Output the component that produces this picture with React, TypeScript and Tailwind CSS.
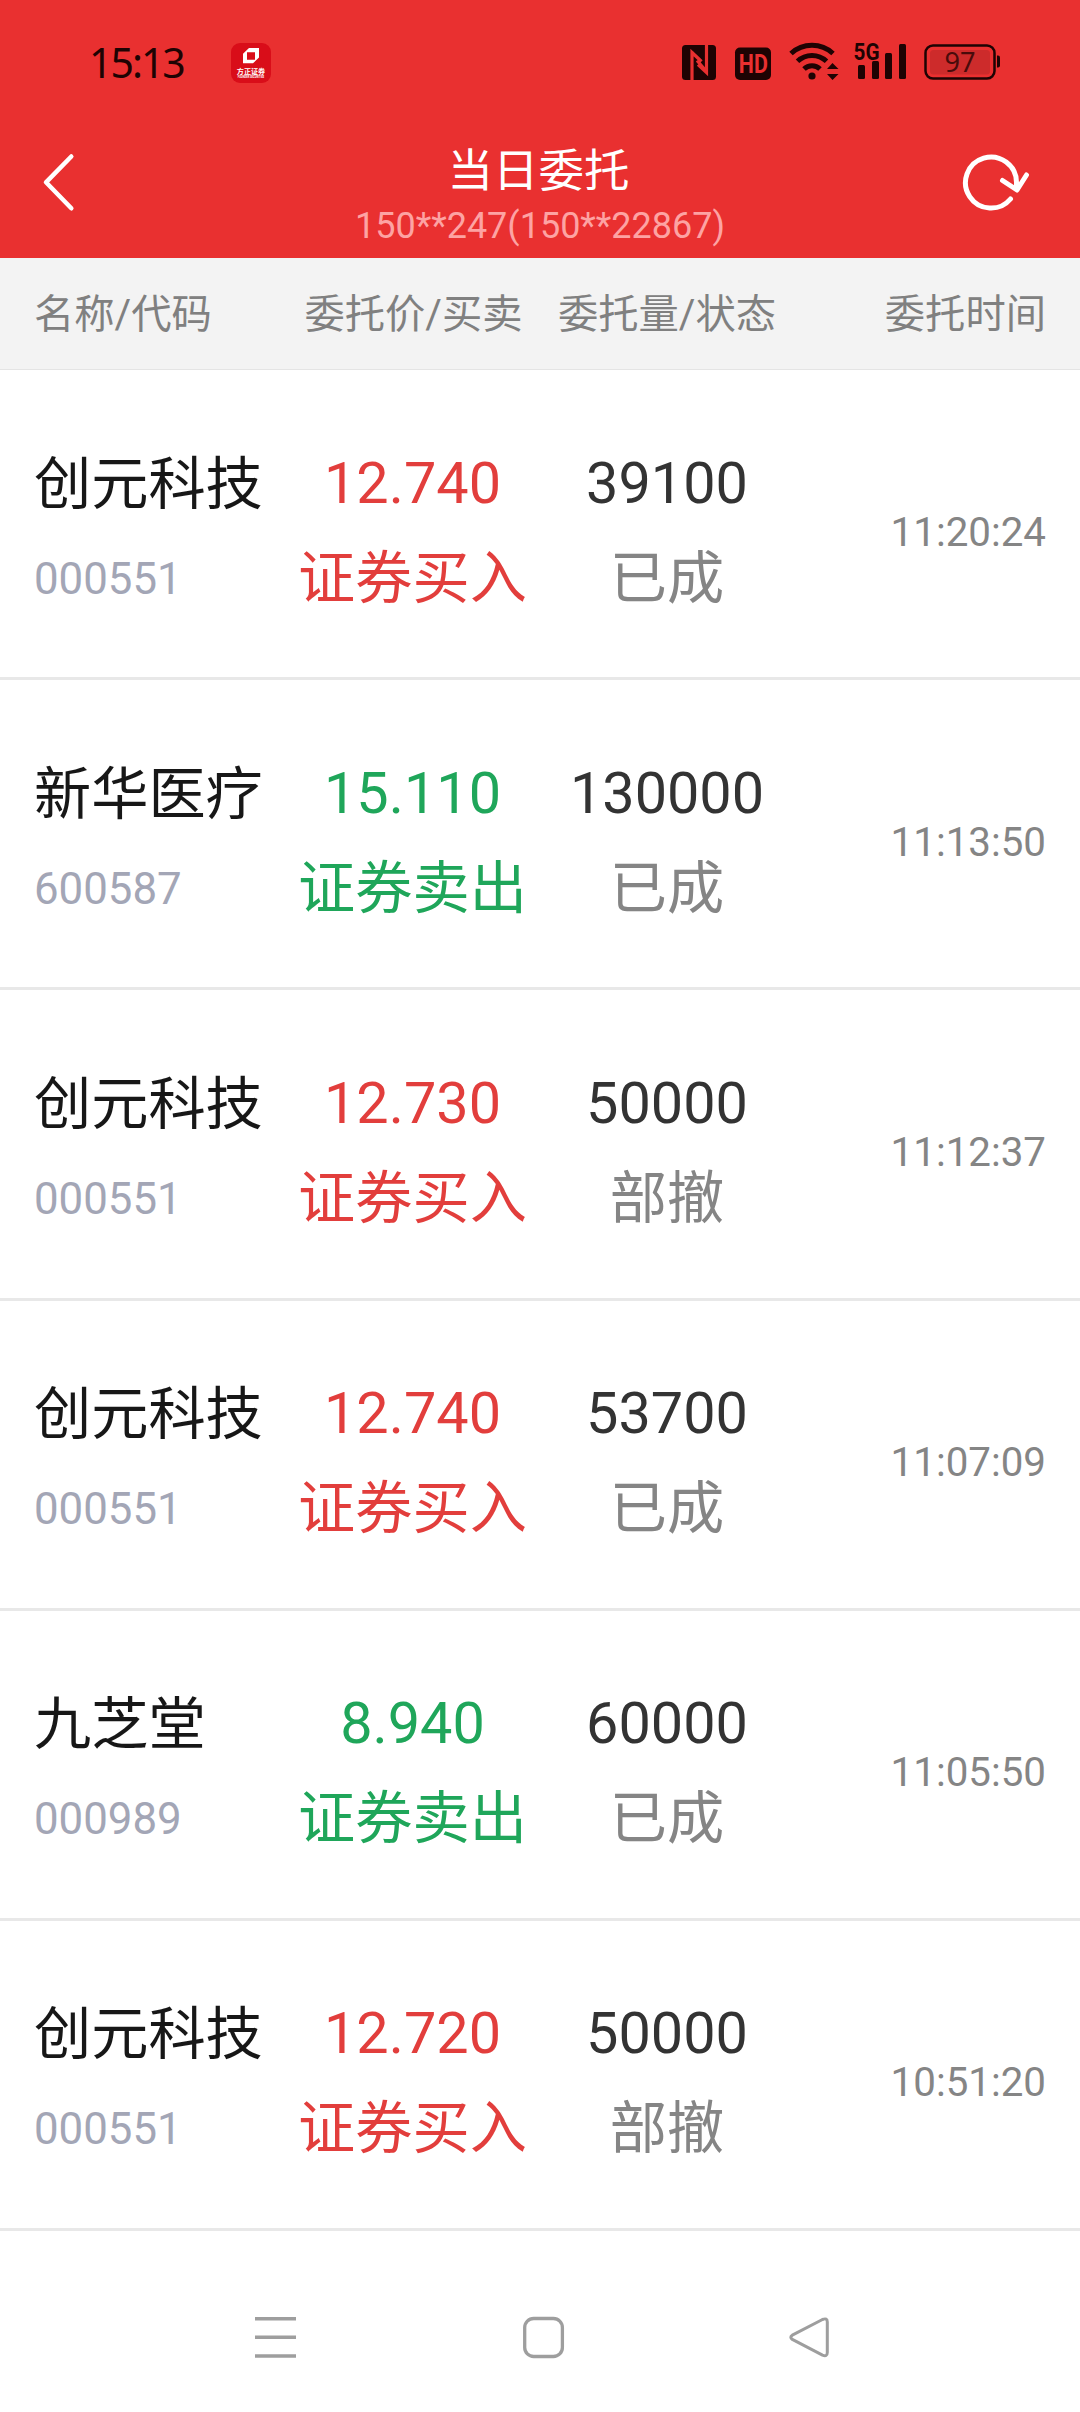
type Side = "buy" | "sell";

type Order = {
  name: string;
  code: string;
  price: string;
  side: Side;
  amount: string;
  status: string;
  time: string;
};

const orders: Order[] = [
  { name: "创元科技", code: "000551", price: "12.740", side: "buy", amount: "39100", status: "已成", time: "11:20:24" },
  { name: "新华医疗", code: "600587", price: "15.110", side: "sell", amount: "130000", status: "已成", time: "11:13:50" },
  { name: "创元科技", code: "000551", price: "12.730", side: "buy", amount: "50000", status: "部撤", time: "11:12:37" },
  { name: "创元科技", code: "000551", price: "12.740", side: "buy", amount: "53700", status: "已成", time: "11:07:09" },
  { name: "九芝堂", code: "000989", price: "8.940", side: "sell", amount: "60000", status: "已成", time: "11:05:50" },
  { name: "创元科技", code: "000551", price: "12.720", side: "buy", amount: "50000", status: "部撤", time: "10:51:20" },
];

const sideLabel: Record<Side, string> = { buy: "证券买入", sell: "证券卖出" };
const sideColor: Record<Side, string> = { buy: "text-[#e23e3c]", sell: "text-[#1fa65a]" };

function BrokerBadge() {
  return (
    <svg className="ml-[47px] size-10" viewBox="0 0 40 40">
      <rect width="40" height="40" rx="9" fill="#d90d19" />
      <path fillRule="evenodd" fill="#fff" d="M18 5H28v9.500L22 20.300H12v-9.500zM16 9.300v7.500h8V9.300z" />
      <text x="20" y="31" textAnchor="middle" fontSize="7.100" fontWeight="700" fill="#fff" fontFamily="Noto Sans CJK SC, sans-serif">方正证券</text>
      <text x="20" y="35" textAnchor="middle" fontSize="2.600" fontWeight="700" fill="#fff" fontFamily="Roboto, sans-serif">FOUNDER SECURITIES</text>
    </svg>
  );
}

function StatusBar() {
  return (
    <div className="flex h-[125px] items-start pl-[89px] text-[#1e0303]">
      <span className="mt-[37px] w-[95px] whitespace-nowrap font-['Noto_Sans'] text-[41px] leading-[50px] tracking-[-2px]">15:13</span>
      <div className="mt-[43px]">
        <BrokerBadge />
      </div>
      <svg className="ml-[409px] mt-[38px] h-[46px] w-[330px]" viewBox="680 38 330 46" fill="currentColor">
        {/* nfc */}
        <rect x="682" y="45" width="34" height="35" rx="3.500" />
        <path d="M692 80V52.500L700 60M706.500 45V72.500L698 64.500M692 52.500L701.500 61.500M697 60.500l9.500 11" fill="none" stroke="#e93030" strokeWidth="3.200" />
        {/* hd */}
        <rect x="735" y="47.500" width="36" height="32.500" rx="5" />
        <text x="753.300" y="72.800" textAnchor="middle" fontSize="25" fontWeight="700" textLength="29" lengthAdjust="spacingAndGlyphs" fill="#e93030" fontFamily="Roboto, sans-serif">HD</text>
        {/* wifi */}
        <g fill="none" stroke="currentColor" strokeWidth="5">
          <path d="M791 53.500a31 31 0 0 1 42 0" />
          <path d="M797.500 61.200a21 21 0 0 1 29 0" />
          <path d="M804 69a11.500 11.500 0 0 1 16 0" />
        </g>
        <circle cx="812" cy="76" r="3.600" />
        <path d="M827 69l5.500-6 6 6zM827 74l5.500 6 6-6z" />
        {/* signal */}
        <text x="853.500" y="59.500" fontSize="24" fontWeight="700" textLength="26" lengthAdjust="spacingAndGlyphs" fontFamily="Roboto, sans-serif">5G</text>
        <rect x="858" y="65" width="7" height="14" rx="1.500" />
        <rect x="872" y="61" width="7" height="18" rx="1.500" />
        <rect x="885" y="53" width="7" height="26" rx="1.500" />
        <rect x="899" y="44" width="7" height="35" rx="1.500" />
        {/* battery */}
        <rect x="925.500" y="45.500" width="69" height="33" rx="7.500" fill="none" stroke="currentColor" strokeWidth="2.500" />
        <rect x="930" y="50" width="60" height="24.500" rx="3.500" fill="#cd2b2b" />
        <path d="M997 55.500h1a2 2 0 0 1 2 2v8a2 2 0 0 1-2 2h-1z" />
        <text x="960" y="72.300" textAnchor="middle" fontSize="28" textLength="31" lengthAdjust="spacingAndGlyphs" fill="#4a0b0b" fontFamily="Noto Sans, sans-serif">97</text>
      </svg>
    </div>
  );
}

function TitleBar() {
  return (
    <div className="flex h-[133px] justify-between pl-[40px] pr-[48px] text-white">
      <svg className="mt-[27px] h-[60px] w-[40px]" viewBox="40 152 40 60" fill="none" stroke="currentColor" strokeWidth="4.500" strokeLinecap="round" strokeLinejoin="round">
        <path d="M71.300 156.500L46 182.300l25.300 26" />
      </svg>
      <div className="flex flex-col items-center pl-[38px]">
        <h1 className="mr-[3px] mt-[16px] text-[45.500px] leading-[62px]">当日委托</h1>
        <p className="-mt-px text-[36px] leading-[48px] text-[#fda3a3]">150**247(150**22867)</p>
      </div>
      <svg className="mt-[27px] h-[60px] w-[70px]" viewBox="962 152 70 60" fill="none" stroke="currentColor" strokeWidth="5" strokeLinecap="round" strokeLinejoin="round">
        <path d="M1010.500 199a25.500 25.500 0 1 1 6-16.500v6" />
        <path d="M1002.500 180.500l14.500 9.500 9.500-15" />
      </svg>
    </div>
  );
}

function OrderRow({ order }: { order: Order }) {
  return (
    <li className="grid h-[310.200px] grid-cols-[253px_253px_254px_252px] border-b-[3px] border-[#e8e8e8] pl-[34px] pt-[65.500px] leading-[95px]">
      <div className="whitespace-nowrap">
        <p className="pt-px text-[57.200px] text-[#171717]">{order.name}</p>
        <p className="text-[43.800px] text-[#a3a6b6]">{order.code}</p>
      </div>
      <div className={`-ml-px mr-px whitespace-nowrap text-center ${sideColor[order.side]}`}>
        <p className="text-[57.600px]">{order.price}</p>
        <p className="text-[57.200px]">{sideLabel[order.side]}</p>
      </div>
      <div className="text-center">
        <p className="text-[57.600px] text-[#333333]">{order.amount}</p>
        <p className="text-[57.200px] text-[#858585]">{order.status}</p>
      </div>
      <p className="pt-[49px] text-right text-[40.300px] text-[#858585]">{order.time}</p>
    </li>
  );
}

function NavBar() {
  return (
    <nav className="flex h-[181px] items-start pl-[250px] pt-[81px] text-[#9e9e9e]">
      <svg className="h-[50px] w-[50px]" viewBox="250 2312 50 50" stroke="currentColor" strokeWidth="3.600">
        <path d="M255 2318.700h41M255 2337.300h41M255 2356h41" />
      </svg>
      <svg className="ml-[218px] h-[50px] w-[50px]" viewBox="518 2312 50 50" fill="none" stroke="currentColor" strokeWidth="3.300">
        <rect x="524.700" y="2318.500" width="37.700" height="38" rx="9" />
      </svg>
      <svg className="ml-[217px] h-[50px] w-[50px]" viewBox="785 2312 50 50" fill="none" stroke="currentColor" strokeWidth="3" strokeLinejoin="round">
        <path d="M822.500 2319.500L792.300 2335.200q-3 2.100 0 4.200l30.200 15.700q4.800 2 4.800-2.500v-30.600q0-4.500-4.800-2.500z" />
      </svg>
    </nav>
  );
}

export default function App() {
  return (
    <main className="h-[2412px] w-[1080px] overflow-hidden bg-white font-[Roboto,'Noto_Sans_CJK_SC',sans-serif]">
      <header className="bg-[#e93030]">
        <StatusBar />
        <TitleBar />
      </header>
      <div className="grid h-[112px] grid-cols-[253px_253px_254px_252px] border-b border-[#e4e4e4] bg-[#f3f3f3] pl-[34px] text-[40.300px] leading-[113px] text-[#808080]">
        <span>名称/代码</span>
        <span className="text-center">委托价/买卖</span>
        <span className="text-center">委托量/状态</span>
        <span className="text-right">委托时间</span>
      </div>
      <ul>
        {orders.map((order) => (
          <OrderRow key={order.time} order={order} />
        ))}
      </ul>
      <NavBar />
    </main>
  );
}
